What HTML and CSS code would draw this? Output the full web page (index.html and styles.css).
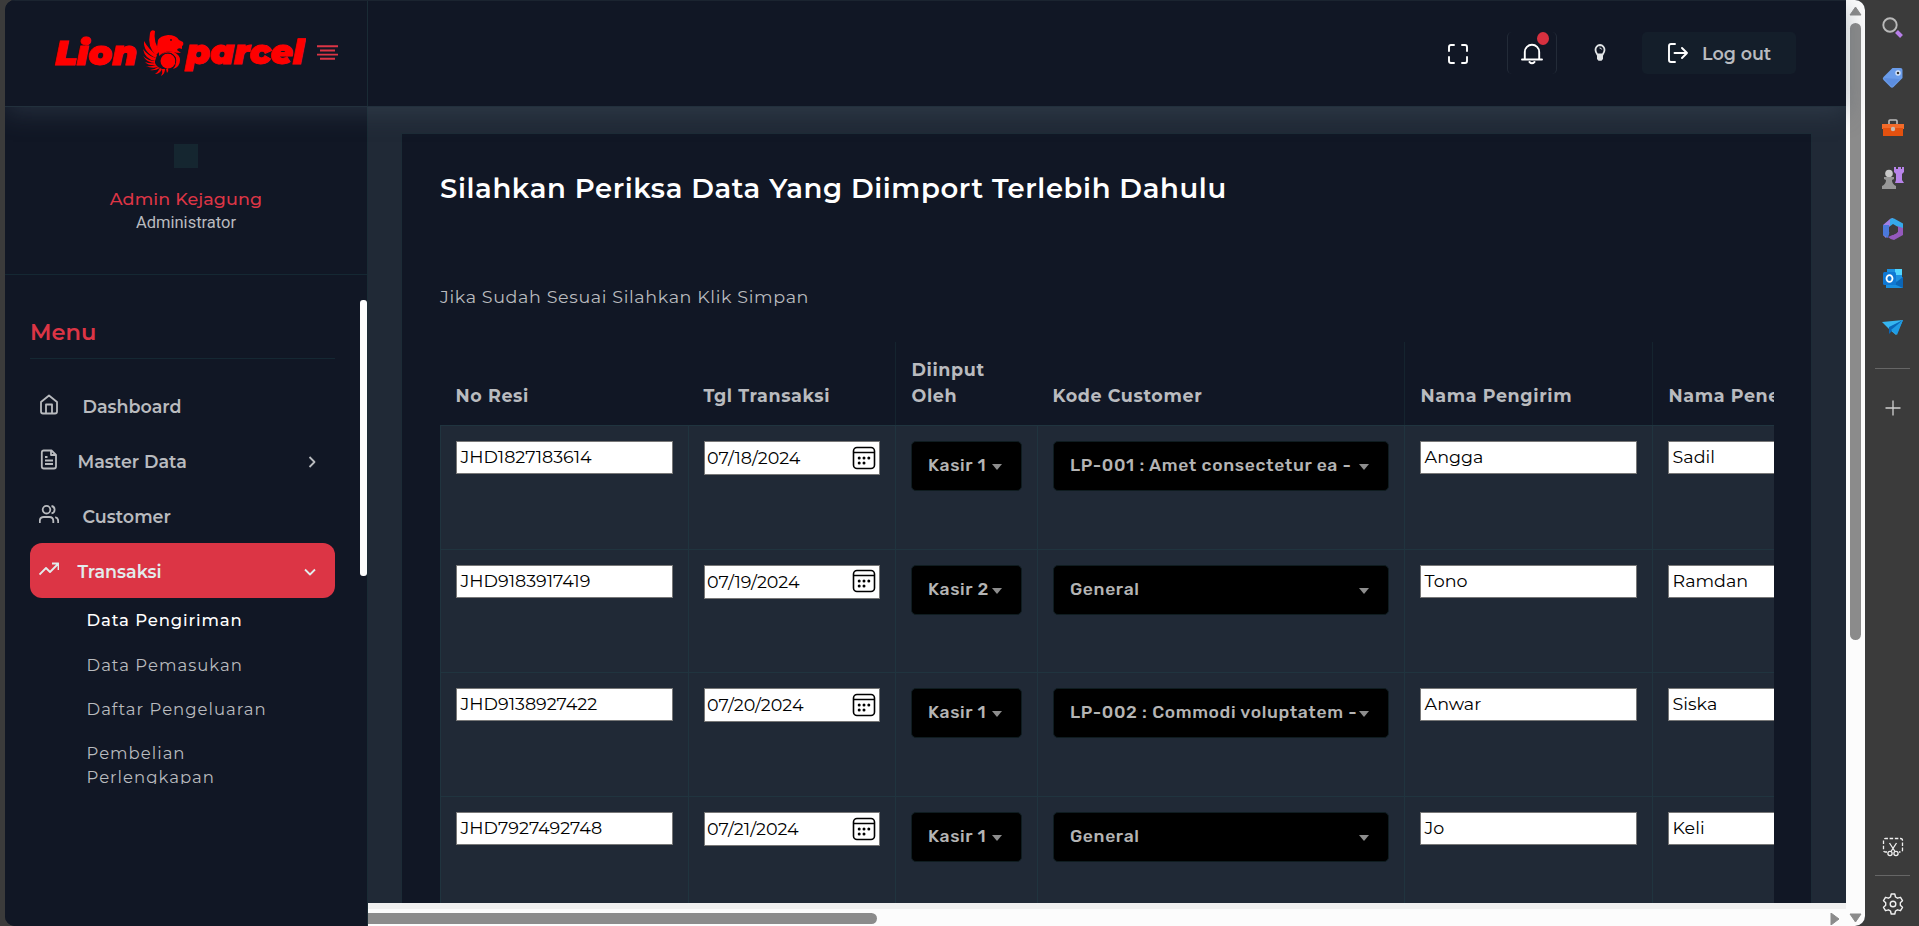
FILE: index.html
```html
<!DOCTYPE html>
<html lang="id">
<head>
<meta charset="utf-8">
<title>Lion Parcel</title>
<link rel="stylesheet" href="styles.css">
</head>
<body>
<div class="window">
  <div class="page">
    <header class="topbar">
      <div class="brand">
        <svg class="logo" width="252" height="50" viewBox="54 28 252 50" fill="#fe0000">
          <text class="logo-text" x="55" y="64.500" textLength="82" lengthAdjust="spacingAndGlyphs">Lion</text>
          <text class="logo-text" x="186" y="63.500" textLength="118" lengthAdjust="spacingAndGlyphs">parcel</text>
          <path d="M155 31Q151 29 150 33Q147 47 156 55L160 51Q153 42 155 31Z"/>
          <path d="M144 41Q143 52 156 58L157 55Q149 50 144 41Z"/>
          <path d="M143 49Q145 59 155 61L156 58Q148 56 143 49Z"/>
          <path d="M143 56Q147 63 155 63L155 61Q148 61 143 56Z"/>
          <path d="M145 62Q149 66 156 65L155 63Q150 64 145 62Z"/>
          <path d="M146 66Q152 69 158 67L156 65Q151 67 146 66Z"/>
          <path d="M150 70Q155 71 160 68L158 67Q154 70 150 70Z"/>
          <path d="M155 74Q160 74 162 69L160 68Q158 72 155 74Z"/>
          <path d="M161 76Q165 74 165 69L162 69Q163 73 161 76ZM167 73Q169 71 168 68L166 69Z"/>
          <path d="M158 40Q160 36 168 35Q176 35 179 40L183 42Q184 45 182 46L182 49Q178 47 177 50L181 53Q176 53 173 52Q165 50 159 56Q159 49 157 47Z"/>
          <circle cx="168" cy="61" r="7.500"/>
          <path d="M160 57Q164 52 171 53Q177 56 176 62Q176 66 173 69Q180 67 180 60Q180 55 174 52Q164 50 160 57Z"/>
          <path d="M160 57Q164 51.500 171 53.500Q177 57 175.500 63" fill="none" stroke="#111725" stroke-width=".8"/>
          <circle cx="171" cy="40" r=".9" fill="#111725"/>
        </svg>
        <svg class="burger" width="21" height="16" viewBox="0 0 21 16" stroke="#dc3545" stroke-width="1.900"><path d="M0 1.200h21M3 5.500h15M0 9.600h21M3 13.800h15"/></svg>
      </div>
      <div class="actions">
        <svg class="fullscreen" width="20" height="20" viewBox="0 0 20 20"><path class="line" d="M1 7V3q0-2 2-2h3M14 1h3q2 0 2 2v4M19 13v4q0 2-2 2h-3M6 19H3q-2 0-2-2v-4"/></svg>
        <div class="bell">
          <svg width="22" height="22" viewBox="0 0 22 22"><path class="line" d="M1 16.500h20M3.800 16V9a7.200 7.200 0 0 1 14.400 0v7M8.500 19q2.500 2.600 5 0"/></svg>
          <span class="dot"></span>
        </div>
        <svg class="bulb" width="12" height="18" viewBox="0 0 12 18"><path d="M6 1a4.700 4.700 0 0 0-4.500 5Q1.500 8 3.300 10.500h5.400Q10.500 8 10.500 6A4.700 4.700 0 0 0 6 1Z" fill="none" stroke="#e3e6e8" stroke-width="1.800"/><path d="M3 10h6v5l-1.500 1.800h-3L3 15Z" fill="#e3e6e8"/><path d="M5.500 4q2 0 2.200 1.500" fill="none" stroke="#e3e6e8"/></svg>
        <button class="logout">
          <svg width="20" height="20" viewBox="0 0 20 20"><path class="line" d="M7 1H3Q1 1 1 3v14q0 2 2 2h4M6.500 10h12.500M14 5l5 5-5 5"/></svg>
          <span>Log out</span>
        </button>
      </div>
    </header>
    <div class="columns">
      <aside class="sidebar">
        <div class="profile">
          <span class="avatar"></span>
          <span class="name">Admin Kejagung</span>
          <span class="role">Administrator</span>
        </div>
        <nav class="menu">
          <h2 class="menu-title"><span>Menu</span></h2>
          <a class="item wide"><svg width="20" height="22" viewBox="0 0 20 22"><path d="M2 8l8-6.500L18 8v9.500q0 2-2 2H4q-2 0-2-2ZM7 19.500v-9h6v9"/></svg><span>Dashboard</span></a>
          <a class="item"><svg width="20" height="22" viewBox="0 0 20 22"><path d="M4.500 1.500h8L17 6v11.500q0 2-2 2H4.800q-2 0-2-2v-14q0-2 2-2ZM12 1.500V6h5M6 8h2.500M6 11.500h8M6 15h8"/></svg><span>Master Data</span><svg class="arrow" width="12" height="12" viewBox="0 0 12 12"><path d="M3.500 1l5 5-5 5"/></svg></a>
          <a class="item wide"><svg width="20" height="22" viewBox="0 0 20 22"><path d="M.8 19v-2q0-4 4-4h5.500q4 0 4 4v2M19.200 19v-2q0-3-3-3.800M12.500 2a3.700 3.700 0 0 1 0 7.300"/><circle cx="7.500" cy="5.700" r="3.800"/></svg><span>Customer</span></a>
          <a class="item active"><svg width="20" height="22" viewBox="0 0 20 22"><path d="M.5 15.500l6.500-6.500 4 4 8-8M13 4.500h6.500V11"/></svg><span>Transaksi</span><svg class="arrow" width="12" height="12" viewBox="0 0 12 12"><path d="M1 3.500l5 5 5-5"/></svg></a>
          <div class="sub">
            <a class="current">Data Pengiriman</a>
            <a>Data Pemasukan</a>
            <a>Daftar Pengeluaran</a>
            <a>Pembelian<br>Perlengkapan</a>
          </div>
        </nav>
        <span class="side-thumb"></span>
      </aside>
      <main class="main">
        <div class="content">
          <section class="card">
            <h1>Silahkan Periksa Data Yang Diimport Terlebih Dahulu</h1>
            <p class="hint">Jika Sudah Sesuai Silahkan Klik Simpan</p>
            <div class="table-wrap">
              <table>
                <colgroup><col class="c1"><col class="c2"><col class="c3"><col class="c4"><col class="c5"><col class="c6"></colgroup>
                <thead>
                  <tr><th>No Resi</th><th>Tgl Transaksi</th><th>Diinput<br>Oleh</th><th>Kode Customer</th><th>Nama Pengirim</th><th>Nama Penerima</th></tr>
                </thead>
                <tbody id="rows"></tbody>
              </table>
            </div>
          </section>
        </div>
        <div class="hscroll"><span class="hthumb"></span><svg width="10" height="12" viewBox="0 0 10 12"><path d="M1 0v12l8-6Z" fill="#8b8b8b" stroke="#8b8b8b" stroke-linejoin="round"/></svg></div>
      </main>
    </div>
  </div>
  <div class="vscroll">
    <svg width="13" height="10" viewBox="0 0 13 10"><path d="M6.500 1L12 9H1Z" fill="#8b8b8b" stroke="#8b8b8b" stroke-linejoin="round"/></svg>
    <span class="vthumb"></span>
    <svg width="13" height="10" viewBox="0 0 13 10"><path d="M6.500 9L12 1H1Z" fill="#8b8b8b" stroke="#8b8b8b" stroke-linejoin="round"/></svg>
  </div>
</div>
<div class="edgebar">
  <svg width="24" height="24" viewBox="0 0 24 24"><circle cx="9" cy="9" r="6.700" fill="#454545" stroke="#b9b9b9" stroke-width="1.900"/><path d="M15.500 15.500l5 5" stroke="#b77ee8" stroke-width="4"/></svg>
  <svg width="24" height="24" viewBox="0 0 24 24"><path d="M11.500 2h8q2 0 2 2v8L12.500 21q-1.500 1.500-3 0l-7-7q-1.500-1.500 0-3Z" fill="#6a9cea"/><path d="M2.500 12l8.500 9 8-8Z" fill="#5585d8" opacity=".6"/><circle cx="17" cy="7" r="2" fill="#333" stroke="#d6e4fa" stroke-width="1.400"/></svg>
  <svg width="24" height="24" viewBox="0 0 24 24"><path d="M8 8V5q0-1 1-1h6q1 0 1 1v3" fill="none" stroke="#bdbdbd" stroke-width="1.600"/><path d="M1 8h22v5H1Z" fill="#f36b2a"/><path d="M2 12h20v8H2Z" fill="#e4510f"/><circle cx="12" cy="13" r="2.200" fill="#c9b9b0"/></svg>
  <svg width="24" height="24" viewBox="0 0 24 24"><path d="M13 1h2v2h2V1h3v2h1V1h2v5l-2 2v6l2 3h-9l1-3V8l-2-2Z" fill="#b884ea"/><circle cx="8" cy="7.500" r="3.800" fill="#c8c8c8"/><path d="M3 11h10v2l-2 1q0 4 4 6v3H1v-3q4-2 4-6l-2-1Z" fill="#979797"/></svg>
  <svg width="24" height="24" viewBox="0 0 24 24"><path d="M9 2l3-1v7L8 11v6l-3 4-3-3V8Z" fill="#a080e6"/><path d="M9 2q2-1 4-.5l9 5V12q-3 3-6 1L9 9Z" fill="#35a9ea"/><path d="M22 11v7l-9 5q-3 0-6-3l9-4V9Z" fill="#9459bd"/><path d="M2 8v10l5 3 2-8-1-5Z" fill="#4a78dc"/><path d="M12 7l5 3v5l-5 3-4-3v-5Z" fill="#3b3b3b"/></svg>
  <svg width="24" height="24" viewBox="0 0 24 24"><path d="M6 2h15v12H6Z" fill="#1b8fe0"/><path d="M14 2h7v6h-7Z" fill="#50d5ff"/><path d="M5 12l9 3 8-5v11H5Z" fill="#198fe0"/><path d="M13 17l9-7v11Z" fill="#0b65b6"/><rect x="2" y="5" width="13" height="13" rx="1.500" fill="#0f78d4"/><ellipse cx="8.500" cy="11.500" rx="3" ry="3.400" fill="none" stroke="#fff" stroke-width="1.800"/></svg>
  <svg width="24" height="24" viewBox="0 0 24 24"><path d="M1 5l21-2-7 15-7-6Z" fill="#35b6f1"/><path d="M8 10l14-7L8 17Z" fill="#0a67b8"/><path d="M10 13L22 3l-6 15Z" fill="#1f9be4"/></svg>
  <span class="rule"></span>
  <svg class="plus" width="16" height="16" viewBox="0 0 16 16"><path d="M8 .5v15M.5 8h15" stroke="#d0d0d0" stroke-width="1.300"/></svg>
  <svg class="snip" width="24" height="22" viewBox="0 0 24 22" fill="none" stroke="#f0f0f0" stroke-width="1.300"><path d="M6 16H4.500Q2.500 16 2.500 14V4.500q0-2 2-2h15q2 0 2 2V14q0 2-2 2H18" stroke-dasharray="3.500 1.700"/><path d="M8.500 7l5.500 8.500M15.500 7L10 15.500"/><circle cx="9" cy="17.500" r="2.100"/><circle cx="15" cy="17.500" r="2.100"/></svg>
  <span class="rule low"></span>
  <svg class="gear" width="24" height="24" viewBox="0 0 24 24" fill="none" stroke="#f0f0f0" stroke-width="1.400" stroke-linejoin="round"><path d="M10.200 2h3.600l.7 3 2 1.200 3-.9 2 3.400-2.200 2v2.600l2.200 2-2 3.400-3-.9-2 1.200-.7 3h-3.600l-.7-3-2-1.200-3 .9-2-3.400 2.200-2v-2.600l-2.200-2 2-3.400 3 .9 2-1.200Z"/><circle cx="12" cy="12" r="2.800"/></svg>
</div>
<script src="rows.js"></script>
</body>
</html>
```
FILE: rows.js
```js
const rows = [
  ['JHD1827183614', '07/18/2024', 'Kasir 1', 'LP-001 : Amet consectetur ea -', 'Angga', 'Sadil'],
  ['JHD9183917419', '07/19/2024', 'Kasir 2', 'General', 'Tono', 'Ramdan'],
  ['JHD9138927422', '07/20/2024', 'Kasir 1', 'LP-002 : Commodi voluptatem -', 'Anwar', 'Siska'],
  ['JHD7927492748', '07/21/2024', 'Kasir 1', 'General', 'Jo', 'Keli'],
];
const calendar = '<svg width="24" height="24" viewBox="0 0 24 24"><rect x="1.500" y="1.500" width="21" height="21" rx="3.500" fill="none" stroke="#000" stroke-width="1.600"/><path d="M2 6.500h20" stroke="#000" stroke-width="1.500"/><g><circle cx="7.200" cy="12" r="1.500"/><circle cx="12" cy="12" r="1.500"/><circle cx="16.800" cy="12" r="1.500"/><circle cx="7.200" cy="17" r="1.500"/><circle cx="12" cy="17" r="1.500"/></g></svg>';
const box = t => `<td><div class="box"><span>${t}</span></div></td>`;
const pick = t => `<td><div class="pick"><span>${t}</span><i></i></div></td>`;
document.getElementById('rows').innerHTML = rows.map(r =>
  `<tr>${box(r[0])}<td><div class="box date"><span>${r[1]}</span>${calendar}</div></td>${pick(r[2])}${pick(r[3])}${box(r[4])}${box(r[5])}</tr>`
).join('');
```
FILE: styles.css
```css
* { box-sizing: border-box; }
body { margin: 0; width: 1919px; height: 926px; overflow: hidden; display: flex; padding-left: 5px; background: #3b3b3b; font-family: Montserrat, Inter, sans-serif; color: #b9bbbf; }
.window { width: 1860px; height: 926px; display: flex; border-radius: 10px; overflow: hidden; background: #111725; }
.page { width: 1841px; display: flex; flex-direction: column; }
.topbar { position: relative; z-index: 2; height: 107px; flex: none; display: flex; background: #111725; border-top: 1px solid #1b2430; border-bottom: 1px solid #22303c; box-shadow: 0 6px 24px rgba(70, 86, 102, .38); }
.brand { width: 363px; border-right: 1px solid #1a2b35; display: flex; align-items: flex-start; padding: 27px 0 0 49px; }
.logo { flex: none; }
.logo-text { font: italic 900 33px Montserrat, Inter, sans-serif; stroke: #fe0000; stroke-width: .8px; }
.burger { margin: 17px 0 0 11px; }
.actions { flex: 1; display: flex; justify-content: flex-end; align-items: flex-start; padding: 31px 50px 0 0; }
.line { fill: none; stroke: #fff; stroke-width: 1.9px; stroke-linecap: round; stroke-linejoin: round; }
.fullscreen { margin: 12px 39px 0 0; }
.bell { position: relative; width: 50px; height: 42px; border: 1px solid #232b38; border-width: 0 1px; border-radius: 5px; padding: 11px 0 0 13px; }
.dot { position: absolute; left: 29px; top: 0; width: 12px; height: 13px; border-radius: 50%; background: #d7303f; }
.bulb { margin: 12px 36px 0 37px; }
.logout { width: 154px; height: 42px; border: 0; border-radius: 5px; background: #141e2a; display: flex; align-items: center; gap: 14px; padding: 0 0 0 26px; font: 600 17.5px Montserrat, Inter, sans-serif; color: #b9bbbf; }
.columns { display: flex; flex: 1; min-height: 0; }
.sidebar { position: relative; width: 363px; border-right: 1px solid #1a2b35; background: #111725; }
.profile { height: 168px; border-bottom: 1px solid #152833; display: flex; flex-direction: column; align-items: center; padding-top: 37px; }
.avatar { width: 24px; height: 24px; background: #152630; margin: 0 0 18px; }
.name { font-weight: 500; font-size: 17.5px; letter-spacing: .12px; line-height: 25px; color: #dc3545; }
.role { font: 400 16.5px/24px Roboto, sans-serif; color: #b9bbbf; }
.menu { padding: 41px 32px 0 25px; height: 509px; overflow: hidden; }
.menu-title { margin: 0 0 19px; height: 43px; border-bottom: 1px solid #152833; font-weight: 600; font-size: 22.5px; line-height: 32px; color: #dc3545; }
.item { display: flex; align-items: center; height: 55px; padding: 2px 17px 0 9px; border-radius: 12px; font-weight: 600; font-size: 17.5px; }
.item svg { fill: none; stroke: currentColor; stroke-width: 1.8px; stroke-linejoin: round; margin-top: -3px; }
.item span { margin-left: 18.5px; flex: 1; }
.item.wide span { margin-left: 23.5px; }
.item .arrow { margin-top: 0; }
.item.active { background: #dc3545; color: #e2ecec; padding-right: 19px; }
.sub a { display: block; padding: 10.2px 0 10.2px 56.5px; font-size: 16.5px; line-height: 24px; letter-spacing: 1px; }
.sub .current { color: #fff; font-weight: 500; letter-spacing: .87px; }
.side-thumb { position: absolute; right: 0; top: 193px; width: 7px; height: 276px; border-radius: 3px; background: #fcfcfd; }
.main { flex: 1; min-width: 0; display: flex; flex-direction: column; }
.content { height: 796px; overflow: hidden; background: #202936; padding: 26px 34px 0 33px; }
.card { height: 900px; background: #111725; border: 1px solid #1c2b36; padding: 36px 36px 0 38px; }
h1 { margin: 0 0 73px; font-weight: 600; font-size: 27.5px; letter-spacing: .625px; line-height: 36px; color: #fff; }
.hint { margin: 0; font-size: 17.5px; letter-spacing: .625px; line-height: 36px; }
.table-wrap { margin-top: 27px; width: 1334px; overflow: hidden; }
table { width: 1460px; table-layout: fixed; border-collapse: separate; border-spacing: 0; }
.c1 { width: 248px; } .c2 { width: 207px; } .c3 { width: 142px; } .c4 { width: 367px; } .c5, .c6 { width: 248px; }
th { height: 83px; padding: 15px 15px 16px 15.5px; text-align: left; vertical-align: bottom; font-weight: 700; font-size: 17.5px; letter-spacing: .625px; line-height: 26px; }
th:nth-child(3), th:nth-child(5), th:nth-child(6) { border-left: 1px solid #15242f; }
td { height: 123.7px; padding: 15px; vertical-align: top; background: #202936; border: 1px solid #20343f; border-width: 1px 0 0 1px; }
.box { height: 33px; width: 217px; background: #fff; border: 1px solid #777; padding: 0 3.6px; color: #000; font-size: 17.5px; line-height: 29px; }
.box.date { width: 176px; height: 34px; display: flex; align-items: center; justify-content: space-between; padding: 0 3px 1px 2px; }
.pick { height: 50px; background: #000; border: 1px solid #0f1c20; border-radius: 5px; display: flex; align-items: center; justify-content: space-between; padding: 0 19px 2px 16px; font: 500 17.5px Rubik, Inter, sans-serif; letter-spacing: .625px; color: #b4b4b4; white-space: nowrap; }
.pick i { flex: none; margin-left: -8px; border: 5px solid transparent; border-top: 6px solid #8d8d8d; border-bottom: 0; margin-top: 4px; }
.hscroll { height: 23px; background: #fcfcfc; border-top: 6px solid #f0f0f0; display: flex; align-items: flex-start; justify-content: space-between; padding: 4px 6px 0 0; }
.hthumb { width: 509px; height: 11px; background: #8b8b8b; border-radius: 0 6px 6px 0; }
.vscroll { width: 19px; background: #fcfcfc; display: flex; flex-direction: column; align-items: center; padding: 6px 0 3px; }
.vscroll svg:last-child { margin-top: auto; }
.vthumb { width: 11px; height: 617px; margin-top: 7px; border-radius: 6px; background: #8b8b8b; }
.edgebar { width: 54px; display: flex; flex-direction: column; align-items: center; padding: 15.5px 0 0 1px; gap: 26.3px; }
.rule { width: 35px; height: 1px; flex: none; background: #666; }
.plus { margin-top: 5px; }
.snip { margin-top: auto; }
.rule.low { margin: -10px 0; }
.gear { margin-bottom: 10px; }
```
